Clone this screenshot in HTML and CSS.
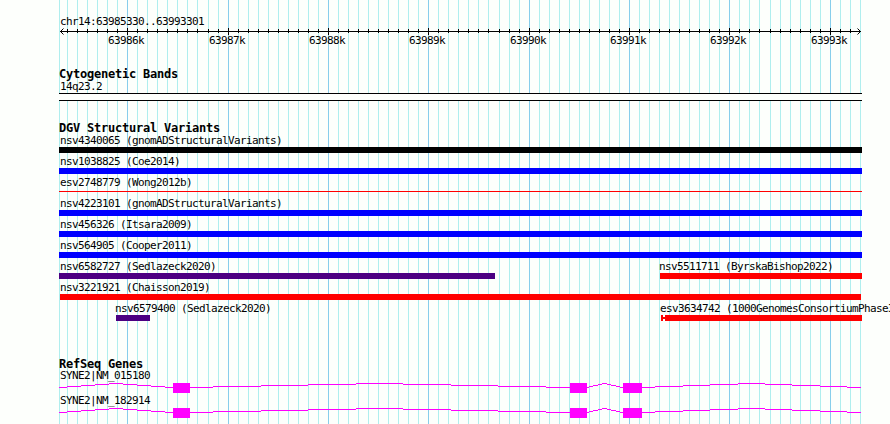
FILE: index.html
```html
<!DOCTYPE html>
<html lang="en">
<head>
  <meta charset="UTF-8" />
  <title>chr14:63985330..63993301</title>
  <link rel="stylesheet" href="styles.css">
</head>
<body>
  <div class="browser">
    <svg class="grid" id="grid" width="803" height="424"></svg>

    <div class="region">chr14:63985330..63993301</div>
    <svg class="ruler" id="ruler" width="803" height="7"></svg>
    <div class="ticks">
      <span>63986k</span>
      <span class="wide">63987k</span>
      <span>63988k</span>
      <span>63989k</span>
      <span class="wide">63990k</span>
      <span>63991k</span>
      <span>63992k</span>
      <span class="wide">63993k</span>
    </div>

    <section class="track cyto">
      <h2>Cytogenetic Bands</h2>
      <div class="label">14q23.2</div>
      <div class="band"></div>
    </section>

    <section class="track variants">
      <h2>DGV Structural Variants</h2>
      <div class="row"><div class="feature"><div class="label">nsv4340065 (gnomADStructuralVariants)</div><div class="bar complex"></div></div></div>
      <div class="row"><div class="feature"><div class="label">nsv1038825 (Coe2014)</div><div class="bar gain"></div></div></div>
      <div class="row"><div class="feature"><div class="label">esv2748779 (Wong2012b)</div><div class="bar thin"></div></div></div>
      <div class="row"><div class="feature"><div class="label">nsv4223101 (gnomADStructuralVariants)</div><div class="bar gain"></div></div></div>
      <div class="row"><div class="feature"><div class="label">nsv456326 (Itsara2009)</div><div class="bar gain"></div></div></div>
      <div class="row"><div class="feature"><div class="label">nsv564905 (Cooper2011)</div><div class="bar gain"></div></div></div>
      <div class="row split-a">
        <div class="feature"><div class="label">nsv6582727 (Sedlazeck2020)</div><div class="bar inversion"></div></div>
        <div class="feature snug"><div class="label">nsv5511711 (ByrskaBishop2022)</div><div class="bar loss"></div></div>
      </div>
      <div class="row inset"><div class="feature snug-one"><div class="label">nsv3221921 (Chaisson2019)</div><div class="bar loss"></div></div></div>
      <div class="row split-b">
        <div class="feature snug"><div class="label">nsv6579400 (Sedlazeck2020)</div><div class="bar inversion"></div></div>
        <div class="feature snug"><div class="label">esv3634742 (1000GenomesConsortiumPhase3)</div>
          <svg class="range" width="201" height="6"><path fill="#f00" d="M0 0h2v6h-2zM2 2h2v2h-2zM4 0h197v6H4z" /></svg>
        </div>
      </div>
    </section>

    <section class="track genes">
      <h2>RefSeq Genes</h2>
      <div class="label">SYNE2|NM_015180</div>
      <svg class="gene" width="803" height="10">
        <g id="transcript">
          <path stroke="#f0f" d="M0 4.5H8M8 3.5H22M22 2.5H36M36 1.5H50M50 .5H64M64 1.5H78M78 2.5H92M92 3.5H106M106 4.5H114
            M131 4.5H154M154 3.5H202M202 2.5H249M249 1.5H297M297 .5H344M344 1.5H392M392 2.5H439M439 3.5H487M487 4.5H511
            M528 4.5H530M530 3.5H534M534 2.5H539M539 1.5H543M543 .5H548M548 1.5H552M552 2.5H557M557 3.5H561M561 4.5H564
            M583 4.5H596M596 3.5H624M624 2.5H651M651 1.5H679M679 .5H706M706 1.5H733M733 2.5H761M761 3.5H788M788 4.5H802" />
          <path fill="#f0f" d="M114 0h17v10h-17zM511 0h17v10h-17zM564 0h19v10h-19z" />
        </g>
      </svg>
      <div class="label">SYNE2|NM_182914</div>
      <svg class="gene" width="803" height="10"><use href="#transcript" /></svg>
    </section>
  </div>

  <script>
    // x of every 100 bp mark, relative to the panel
    const major = [68, 169, 269, 369, 470, 570, 670, 771];
    const marks = [];
    for (let i = 0; i < 80; i++) {
      let x = 8 + i * 10;
      if (i >= 14) x++;
      if (i >= 43) x++;
      if (i >= 70) x++;
      if (x < 802) marks.push(x);
    }

    const lines = (xs, y, h) => xs.map(x => `M${x + 0.5} ${y}v${h}`).join("");
    const minor = marks.filter(x => !major.includes(x));

    document.getElementById("grid").innerHTML =
      `<path stroke="#afeeee" d="${lines([0, ...minor], 0, 424)}"/>` +
      `<path stroke="#87ceeb" d="${lines(major, 0, 424)}"/>`;

    document.getElementById("ruler").innerHTML =
      `<path stroke="#000" d="M1 3.5H802${lines(minor.filter(x => x < 800), 1, 4)}${lines(major, 0, 7)}"/>` +
      `<path fill="none" stroke="#000" d="M4.5 .5L1.5 3.5L4.5 6.5M798.5 .5L801.5 3.5L798.5 6.5"/>`;
  </script>
</body>
</html>
```
FILE: styles.css
```css
body {
  margin: 0;
  height: 424px;
  overflow: hidden;
  background: #fdfffc;
  color: #000;
  font: 11px/13px "DejaVu Sans Mono", "Liberation Mono", monospace;
  letter-spacing: -0.62px;
  white-space: nowrap;
}

svg { display: block; }

.browser {
  position: relative;
  width: 803px;
  height: 424px;
  margin-left: 59px;
}
.browser > * { position: relative; }
.browser > .grid { position: absolute; top: 0; left: 0; }

.region { padding: 15px 0 0 1px; }
.ticks { display: flex; gap: 64px; height: 13px; margin: -1px 0 0 49px; }
.ticks span { width: 36px; }
.ticks .wide { margin-left: 1px; }

h2 {
  margin: 0;
  font-size: 12px;
  line-height: 14px;
  letter-spacing: -0.22px;
}

.label { height: 13px; padding-left: 1px; }

.cyto { padding-top: 20px; }
.cyto .label { margin-top: -1px; }
.band {
  box-sizing: border-box;
  height: 8px;
  border: solid #000;
  border-width: 1px 0;
  background: #fdfffc;
}

.variants { padding-top: 20px; }
.variants h2 { height: 11px; }
.row { display: grid; height: 21px; }
.feature { min-width: 0; }
.row .label { padding-top: 2px; }
.snug .label { margin-left: -1px; padding-left: 0; }
.snug-one .label { padding-left: 0; }
.split-a { grid-template-columns: 436px 202px; column-gap: 165px; }
.split-b { grid-template-columns: 34px 201px; column-gap: 511px; padding-left: 57px; }
.inset { padding: 0 1px; }

.bar { height: 6px; }
.complex { background: #000; }
.gain { background: #00f; }
.loss { background: #f00; }
.inversion { background: #4b0082; }
.thin { height: 1px; margin-top: 2px; background: #f00; }

.genes { padding-top: 36px; }
.genes h2 { height: 12px; }
.genes .label { margin-bottom: 1px; }
.genes .gene + .label { padding-top: 1px; }
```
